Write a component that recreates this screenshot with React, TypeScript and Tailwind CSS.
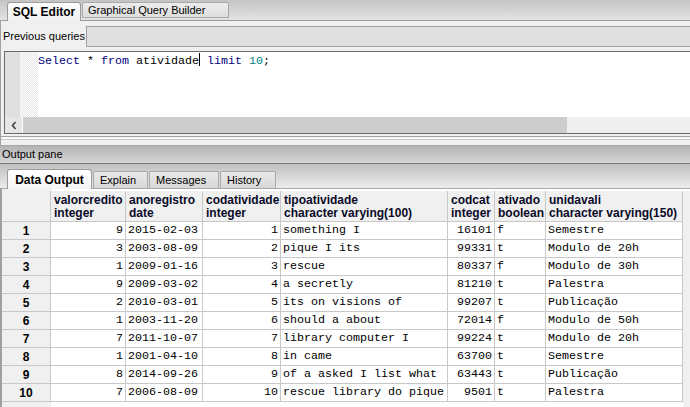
import React from 'react';

const rows: [number, number, string, number, string, number, string, string][] = [
  [1, 9, '2015-02-03', 1, 'something I', 16101, 'f', 'Semestre'],
  [2, 3, '2003-08-09', 2, 'pique I its', 99331, 't', 'Modulo de 20h'],
  [3, 1, '2009-01-16', 3, 'rescue', 80337, 'f', 'Modulo de 30h'],
  [4, 9, '2009-03-02', 4, 'a secretly', 81210, 't', 'Palestra'],
  [5, 2, '2010-03-01', 5, 'its on visions of', 99207, 't', 'Publicação'],
  [6, 1, '2003-11-20', 6, 'should a about', 72014, 'f', 'Modulo de 50h'],
  [7, 7, '2011-10-07', 7, 'library computer I', 99224, 't', 'Modulo de 20h'],
  [8, 1, '2001-04-10', 8, 'in came', 63700, 't', 'Semestre'],
  [9, 8, '2014-09-26', 9, 'of a asked I list what', 63443, 't', 'Publicação'],
  [10, 7, '2006-08-09', 10, 'rescue library do pique', 9501, 't', 'Palestra'],
];

const headers: [string, string][] = [
  ['valorcredito', 'integer'],
  ['anoregistro', 'date'],
  ['codatividade', 'integer'],
  ['tipoatividade', 'character varying(100)'],
  ['codcat', 'integer'],
  ['ativado', 'boolean'],
  ['unidavali', 'character varying(150)'],
];

const widths = ['w-[75px]', 'w-[77px]', 'w-[78px]', 'w-[167px]', 'w-[47px]', 'w-[51px]', 'w-[137px]'];
const rightAlign = [true, false, true, false, true, false, false];

export default function App() {
  const ui = "font-['Liberation_Sans','Arial',sans-serif]";
  const mono = "font-['Liberation_Mono','Courier_New',monospace]";
  return (
    <div className={`w-[690px] h-[407px] overflow-hidden bg-[#f0f0f0] text-black ${ui} text-[11px]`}>
      {/* top tab bar */}
      <div className="h-[21px] bg-gradient-to-b from-[#c4c4c4] to-[#e4e4e4] border-b border-[#9a9a9a] flex items-end pl-[7px]">
        <div className="w-[74px] h-[19px] -mb-px bg-gradient-to-b from-[#fdfdfd] to-[#f0f0f0] border border-b-0 border-[#9c9c9c] rounded-t-[3px] flex items-center justify-center font-bold text-[12px] leading-none whitespace-nowrap">
          SQL Editor
        </div>
        <div className="w-[147px] h-[16px] mb-[2px] ml-px bg-gradient-to-b from-[#ececec] to-[#dedede] border border-[#a8a8a8] rounded-t-[2px] flex items-center pl-[5px] text-[11px] leading-none whitespace-nowrap">
          Graphical Query Builder
        </div>
      </div>
      <div className="h-[5px] border-l border-[#a0a0a0]" />
      {/* previous queries */}
      <div className="h-[21px] flex border-l border-[#a0a0a0]">
        <div className="w-[85px] flex items-center pl-[2px] text-[11px] leading-none whitespace-nowrap">Previous queries</div>
        <div className="flex-1 bg-[#e0e0e0] border border-r-0 border-[#a0a0a0]" />
      </div>
      <div className="h-[4px] border-l border-[#a0a0a0]" />
      {/* editor */}
      <div className="h-[83px] pl-[3px] border-l border-[#a0a0a0]">
        <div className="h-full flex flex-col border-t border-l border-b border-[#6a6a6a] bg-white">
          <div className="flex-1 flex min-h-0">
            <div className="w-[15px] bg-[#e0e0e0]" />
            <div className="w-[18px] bg-[repeating-conic-gradient(#e6e6e6_0_25%,#ffffff_0_50%)] bg-[length:2px_2px]" />
            <div className={`${mono} text-[11.67px] leading-[14px] pt-[2px] whitespace-pre`}>
              <span className="text-[#00007f]">Select</span>
              <span> * </span>
              <span className="text-[#00007f]">from</span>
              <span> atividade</span>
              <span className="inline-block w-px h-[13px] bg-black align-middle -mt-[2px]" />
              <span> </span>
              <span className="text-[#00007f]">limit</span>
              <span> </span>
              <span className="text-[#007f7f]">10</span>
              <span>;</span>
            </div>
          </div>
          <div className="h-[16px] flex">
            <div className="w-[17px] bg-[#e6e6e6] flex items-center justify-center">
              <svg width="8" height="9" viewBox="0 0 8 9">
                <path d="M5.5 1 L2.5 4.5 L5.5 8" stroke="#404040" strokeWidth="1.6" fill="none" />
              </svg>
            </div>
            <div className="w-[544px] bg-[#cdcdcd] ml-px" />
            <div className="flex-1 bg-[#efefef]" />
          </div>
        </div>
      </div>
      {/* splitter */}
      <div className="h-[11px] border-l border-[#a0a0a0] flex flex-col">
        <div className="h-[2px]" />
        <div className="h-px bg-[#a0a0a0]" />
        <div className="h-[2px] bg-[#fafafa]" />
        <div className="h-px bg-[#c8c8c8]" />
      </div>
      {/* output pane header */}
      <div className="h-[19px] border-t border-[#a8a8a8] bg-gradient-to-b from-[#b4b4b4] to-[#d6d6d6] flex items-center pl-[2px] text-[11px] leading-none border-b border-b-[#7a7a7a]">
        Output pane
      </div>
      {/* output tabs */}
      <div className="h-[25px] bg-gradient-to-b from-[#c0c0c0] to-[#ececec] border-b border-[#a8a8a8] flex items-end pl-[7px]">
        <div className="w-[85px] h-[20px] -mb-px bg-gradient-to-b from-[#ffffff] to-[#f4f4f4] border border-b-0 border-[#9c9c9c] rounded-t-[3px] flex items-center justify-center font-bold text-[12px] leading-none whitespace-nowrap">
          Data Output
        </div>
        <div className="w-[55px] h-[17px] ml-px bg-gradient-to-b from-[#e8e8e8] to-[#d8d8d8] border border-b-0 border-[#a8a8a8] rounded-t-[2px] flex items-center pl-[6px] text-[11px] leading-none">
          Explain
        </div>
        <div className="w-[70px] h-[17px] ml-px bg-gradient-to-b from-[#e8e8e8] to-[#d8d8d8] border border-b-0 border-[#a8a8a8] rounded-t-[2px] flex items-center pl-[6px] text-[11px] leading-none">
          Messages
        </div>
        <div className="w-[56px] h-[17px] ml-px bg-gradient-to-b from-[#e8e8e8] to-[#d8d8d8] border border-b-0 border-[#a8a8a8] rounded-t-[2px] flex items-center pl-[6px] text-[11px] leading-none">
          History
        </div>
      </div>
      {/* table */}
      <div className="flex h-full border-l-2 border-[#a0a0a0] pt-[2px] bg-[linear-gradient(to_right,#f0f0f0_49px,#ffffff_49px)]">
        <div className="w-[681px]">
          <div className="flex h-[31px] border-b border-[#c8c8c8] bg-[#f0f0f0]">
            <div className="w-[49px] border-r border-[#c8c8c8]" />
            {headers.map((h, i) => (
              <div
                key={i}
                className={`${widths[i]} border-r border-[#c8c8c8] pl-[3px] pt-[3px] font-bold text-[12px] leading-[13px] text-[#0a0a28] whitespace-nowrap overflow-hidden`}
              >
                <div>{h[0]}</div>
                <div>{h[1]}</div>
              </div>
            ))}
          </div>
          {rows.map((r) => (
            <div key={r[0]} className="flex h-[18px] border-b border-[#c8c8c8]">
              <div className="w-[49px] bg-[#f0f0f0] border-r border-[#c8c8c8] flex items-center justify-center font-bold text-[12px] leading-none">
                {r[0]}
              </div>
              {r.slice(1).map((v, i) => (
                <div
                  key={i}
                  className={`${widths[i]} border-r border-[#c8c8c8] bg-white flex items-center ${
                    rightAlign[i] ? 'justify-end pr-[2px]' : 'pl-[2px]'
                  } ${mono} text-[11.67px] leading-none whitespace-pre overflow-hidden`}
                >
                  {String(v)}
                </div>
              ))}
            </div>
          ))}
        </div>
        <div className="flex-1 bg-[#f0f0f0]" />
      </div>
    </div>
  );
}
